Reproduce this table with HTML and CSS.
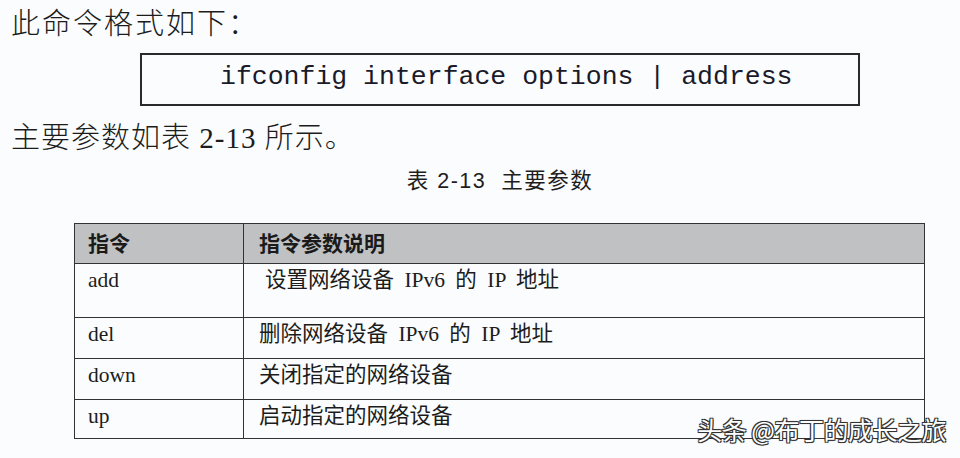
FILE: index.html
```html
<!DOCTYPE html>
<html lang="zh">
<head>
<meta charset="utf-8">
<link rel="stylesheet" href="styles.css">
</head>
<body>
<div class="page">
  <p class="para first">此命令格式如下：</p>
  <div class="cmd">ifconfig interface options | address</div>
  <p class="para">主要参数如表 2-13 所示。</p>
  <div class="caption">表 2-13&nbsp;&nbsp;主要参数</div>
  <table class="tbl">
    <thead>
      <tr class="head"><th class="c1">指令</th><th>指令参数说明</th></tr>
    </thead>
    <tbody>
      <tr class="r-add"><td class="c1">add</td><td class="indent">设置网络设备 IPv6 的 IP 地址</td></tr>
      <tr class="r-std"><td class="c1">del</td><td>删除网络设备 IPv6 的 IP 地址</td></tr>
      <tr class="r-std"><td class="c1">down</td><td>关闭指定的网络设备</td></tr>
      <tr class="r-up"><td class="c1">up</td><td>启动指定的网络设备</td></tr>
    </tbody>
  </table>
  <div class="watermark">头条 @布丁的成长之旅</div>
</div>
</body>
</html>
```
FILE: styles.css
```css
html, body {
  margin: 0;
  padding: 0;
  background: #fbfcfd;
}
.page {
  position: relative;
  width: 960px;
  height: 458px;
  overflow: hidden;
  color: #1c1c1c;
  font-family: "Liberation Serif", "Noto Sans CJK SC", serif;
}
.para {
  margin: 0;
  padding-left: 11px;
  font-family: "Liberation Serif", "Noto Sans CJK SC", serif;
  font-weight: 300;
  font-size: 29px;
  line-height: 40px;
  letter-spacing: 1px;
}
.para.first {
  margin-top: 4px;
  letter-spacing: 2px;
}
.cmd {
  box-sizing: border-box;
  margin: 9px 0 12px 140px;
  width: 720px;
  height: 53px;
  border: 2px solid #2a2a2a;
  padding-left: 78px;
  font-family: "Liberation Mono", monospace;
  font-size: 26.5px;
  line-height: 44px;
  color: #1a1a2a;
}
.caption {
  margin: 10px 0 0 0;
  width: 1000px;
  text-align: center;
  font-family: "Liberation Sans", "Noto Sans CJK SC", sans-serif;
  font-size: 21.5px;
  line-height: 26px;
  font-weight: 400;
  letter-spacing: 1.5px;
  color: #1e1e1e;
}
.tbl {
  margin: 29px 0 0 74px;
  width: 851px;
  border-collapse: collapse;
  font-family: "Liberation Serif", "Noto Sans CJK SC", serif;
  font-size: 21.5px;
}
.tbl th, .tbl td {
  border: 1.5px solid #333;
  text-align: left;
  vertical-align: top;
  padding: 3px 0 0 15px;
  line-height: 26px;
}
.tbl td {
  font-weight: 400;
  word-spacing: 5px;
}
.tbl .c1 {
  width: 155px;
  padding-left: 13px;
}
.tbl td.indent {
  padding-left: 21px;
}
.head th {
  background: #c0c1c3;
  height: 34px;
  font-family: "Noto Sans CJK SC", sans-serif;
  font-weight: 700;
  font-size: 21px;
  padding-top: 5px;
  color: #1a1a1a;
}
.r-add td {
  height: 50px;
}
.r-std td {
  height: 37px;
}
.r-up td {
  height: 35px;
}
.watermark {
  position: absolute;
  right: 14px;
  bottom: 14px;
  font-family: "Noto Sans CJK SC", sans-serif;
  font-size: 25px;
  line-height: 30px;
  color: #ffffff;
  letter-spacing: -0.5px;
  text-shadow: -1px -1px 0 #333, 1px -1px 0 #333, -1px 1px 0 #333, 1px 1px 0 #333, 0 0 2px #000;
}
```
